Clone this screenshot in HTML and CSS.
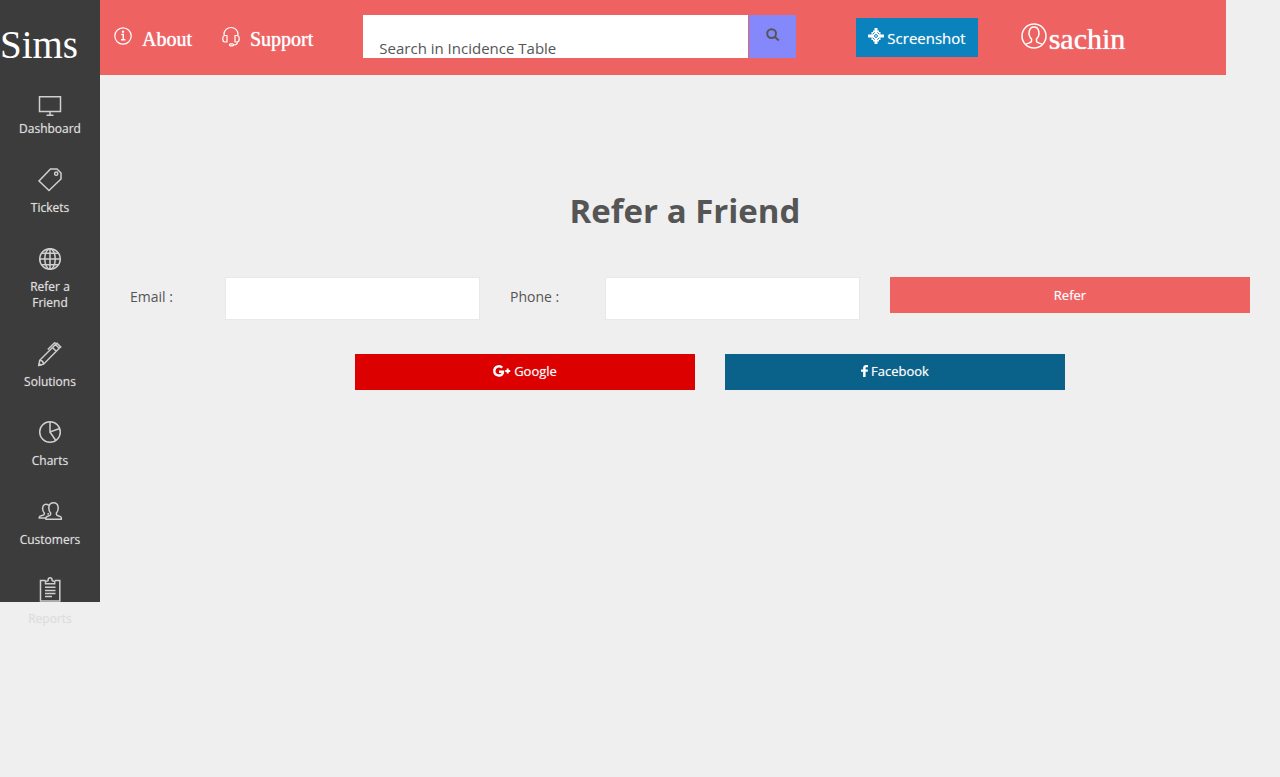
FILE: index.html
```html
<!DOCTYPE html>
<html lang="en">
<head>
<meta charset="utf-8">
<title>Sims - Refer a Friend</title>
<link rel="stylesheet" href="styles.css">
</head>
<body>
<div class="layout">
  <nav class="sidebar" aria-label="Main">
    <a class="brand" href="#">Sims</a>
    <a class="nav-item" href="#">
      <svg class="nav-icon" viewBox="0 0 28 28"><path d="M3.500 7.700h21v14.800h-21zM14 22.500V26M10.500 26.200h7"/></svg>
      <span>Dashboard</span>
    </a>
    <a class="nav-item" href="#">
      <svg class="nav-icon" viewBox="0 0 28 28"><path d="M14.500 1H21l4 4v6L13 22.500 3 13z"/><circle cx="20.200" cy="5.700" r="1.600"/></svg>
      <span>Tickets</span>
    </a>
    <a class="nav-item" href="#">
      <svg class="nav-icon" viewBox="0 0 28 28"><circle cx="14" cy="12" r="10.300"/><ellipse cx="14" cy="12" rx="5.200" ry="10.300"/><path d="M14 1.700v20.600M3.700 12h20.600M5.500 6.300h17M5.500 17.700h17"/></svg>
      <span>Refer a Friend</span>
    </a>
    <a class="nav-item" href="#">
      <svg class="nav-icon" viewBox="0 0 28 28"><path d="M2.800 23.500l.9-5.200L19.500 2.500l3.700 3.700L7.600 22.200zM3.700 18.300c2 .2 3.700 1.900 3.900 3.900M16.500 5.500l3.700 3.700M19.500 2.500l1.500-1.300 3.700 3.700-1.500 1.300M20 1.400L18.500.8 11.800 7.500"/><path class="solid" d="M2.500 24l.6-3.500 2.900 2.800z"/></svg>
      <span>Solutions</span>
    </a>
    <a class="nav-item" href="#">
      <svg class="nav-icon" viewBox="0 0 28 28"><circle cx="14" cy="11" r="10.300"/><path d="M14 .7V11l9.700-3.500M14 11l5.800 8.500"/></svg>
      <span>Charts</span>
    </a>
    <a class="nav-item" href="#">
      <svg class="nav-icon" viewBox="0 0 28 28"><path d="M10 19.300v-2c1-1.500 4.600-1.100 4.600-2.800V13c-2.600-3-2.800-10.300 2.900-10.300s5.500 7.300 2.900 10.300v1.500c0 1.700 4.900 1.300 4.900 3.300v1.500zM12.700 5.200C9.500 3 6.600 4.800 6.600 8.300c0 2 .6 3.700 1.700 4.700v1.300c0 1.500-5 1-5 2.700V18H10M12.200 13v1.800"/></svg>
      <span>Customers</span>
    </a>
    <a class="nav-item" href="#">
      <svg class="nav-icon" viewBox="0 0 28 28"><path d="M9.500 1.500h-5V22h19.300V1.500h-5M9.500 4.800V2.500l2.500-.7c0-4 4.200-4 4.200 0l2.500.7v2.300zM9 8.200h10.500M9 11.500h10.500M9 14.500h10.500M9 17.500h7"/></svg>
      <span>Reports</span>
    </a>
  </nav>

  <div class="content">
    <header class="topbar">
      <a class="top-link about" href="#">
        <svg class="top-icon" viewBox="0 0 18 18"><circle cx="9" cy="9" r="8.200"/><path d="M7.300 7.500H9.300v5M7 12.800h4.400" stroke-width="1.400"/><circle class="solid" cx="9" cy="4.800" r="1.200"/></svg>
        <span>About</span>
      </a>
      <a class="top-link support" href="#">
        <svg class="top-icon" viewBox="0 0 18 18"><path d="M2 8C1.500-2 16.500-2 16 8M5 8.500H3C0 8.500 0 15 3 15h2zM13 8.500h2c3 0 3 6.500 0 6.500h-2zM15.500 15c0 2-1.500 3-4 3"/><rect x="7.500" y="16.800" width="4" height="2" rx="1"/></svg>
        <span>Support</span>
      </a>
      <form class="search">
        <input class="search-input" type="text" placeholder="Search in Incidence Table" aria-label="Search in Incidence Table">
        <button class="search-button" type="button" aria-label="Search">
          <svg class="search-icon" viewBox="0 0 14 14"><circle cx="5.600" cy="5.600" r="4.400"/><path d="M9 9l3.800 3.600"/></svg>
        </button>
      </form>
      <button class="button screenshot" type="button">
        <svg class="target-icon" viewBox="0 0 16 16"><path class="solid" d="M6.500 0h3v2.500h1.500v1.500h1.500v2.500H16v3h-3.500V12H11v1.500H9.500V16h-3v-2.500H5V12H3.500V9.500H0v-3h3.500V4H5V2.500h1.500z"/><path class="cut" d="M6.600 4.300L4.600 6.300M9.400 4.300l2 2M6.600 11.700l-2-2M9.400 11.700l2-2"/><circle class="cut" cx="8" cy="8" r="1.400"/></svg>
        <span>Screenshot</span>
      </button>
      <a class="user" href="#">
        <svg class="user-icon" viewBox="0 0 26 26"><circle cx="13" cy="13" r="12"/><path d="M5 21.500c1-1.800 5.500-1 5.500-3.500v-2C6.500 12 7.500 4 13 4s6.500 8 2.500 12v2c0 2.500 4.500 1.700 5.500 3.500"/></svg>
        <span>sachin</span>
      </a>
    </header>

    <main class="page">
      <h1 class="title">Refer a Friend</h1>
      <form class="refer-form">
        <label class="field-label" for="email">Email :</label>
        <input class="field" id="email" type="email">
        <label class="field-label" for="phone">Phone :</label>
        <input class="field" id="phone" type="tel">
        <button class="button refer" type="button">Refer</button>
      </form>
      <div class="social">
        <button class="button google" type="button">
          <svg class="google-icon" viewBox="0 0 18 12"><path d="M9.200 2.700C6.500 0 1.300 1.600 1.300 6c0 5.300 8.700 6.300 8.700.8H6" stroke-width="2.400"/><path d="M14.700 3.500v5M12.200 6h5" stroke-width="2"/></svg>
          <span>Google</span>
        </button>
        <button class="button facebook" type="button">
          <svg class="facebook-icon" viewBox="0 0 7 12"><path class="solid" d="M7 .1v2.100H5.700c-.9 0-1.100.4-1.100 1.100v1.300H7l-.3 2.200H4.600V12H2.100V6.800H0V4.600h2.100V3C2.100 1 3.300 0 5.200 0z"/></svg>
          <span>Facebook</span>
        </button>
      </div>
    </main>
  </div>
</div>
</body>
</html>
```

FILE: styles.css
```css
* {
  box-sizing: border-box;
}

body {
  margin: 0;
  background: #efefef;
  color: #555;
  font-family: "Open Sans", sans-serif;
  font-size: 14px;
}

a {
  color: inherit;
  text-decoration: none;
}

svg {
  flex: none;
  overflow: visible;
  fill: none;
  stroke: currentColor;
}

.solid {
  fill: currentColor;
  stroke: none;
}

.layout {
  display: flex;
  align-items: flex-start;
  min-height: 100vh;
}

.sidebar {
  flex: 0 0 100px;
  height: 77.5vh;
  background: #3c3c3c;
  color: #dedede;
}

.brand {
  display: block;
  height: 89px;
  color: #fff;
  font: 39px/90px "Liberation Serif", serif;
}

.nav-item {
  display: flex;
  flex-direction: column;
  align-items: center;
  gap: 4px;
  margin-bottom: 31px;
  padding: 0 16px;
  font-size: 12px;
  line-height: 16px;
  text-align: center;
  text-shadow: 0 0 1px rgba(222, 222, 222, 0.6);
}

.nav-icon {
  width: 28px;
  height: 28px;
  color: #cfcfcf;
  stroke-width: 1.5;
}

.content {
  flex: 1;
  min-width: 0;
}

.topbar {
  display: flex;
  align-items: flex-start;
  height: 75px;
  margin-right: 54px;
  background: #ef6262;
  color: #fff;
}

.top-link {
  display: flex;
  gap: 10px;
  padding-top: 27px;
  font: 20px/24px "Liberation Serif", serif;
  text-shadow: 0 0 1px #fff;
}

.about {
  margin-left: 14px;
}

.support {
  margin-left: 30px;
}

.top-icon {
  width: 18px;
  height: 18px;
  stroke-width: 1.2;
}

.search {
  display: flex;
  flex: 1;
  gap: 1px;
  max-width: 433px;
  height: 43px;
  margin: 15px 60px 0 50px;
}

.search-input {
  flex: 1;
  min-width: 0;
  padding: 23px 16px 0;
  border: 0;
  background: #fff;
  color: #555;
  font: 15px/20px "Open Sans", sans-serif;
}

.search-input::placeholder {
  color: #555;
  opacity: 1;
}

.search-button {
  display: flex;
  justify-content: center;
  width: 47px;
  padding: 13px 0 0;
  border: 0;
  background: #8488fb;
  color: #555;
}

.search-icon {
  width: 14px;
  height: 14px;
  stroke-width: 2;
}

.button {
  display: flex;
  align-items: center;
  justify-content: center;
  gap: 3px;
  height: 36px;
  padding: 0 12px;
  border: 0;
  color: #fff;
  font: 13px/18px "Open Sans", sans-serif;
  text-shadow: 0 0 1px rgba(255, 255, 255, 0.5);
}

.screenshot {
  height: 39px;
  margin-top: 18px;
  background: #0a82bd;
  font-size: 15px;
}

.target-icon {
  width: 16px;
  height: 16px;
  margin-bottom: 4px;
}

.cut {
  stroke: #0a82bd;
}

.user {
  display: flex;
  gap: 2px;
  margin-left: 43px;
  padding-top: 23px;
  font: 30px/32px "Liberation Serif", serif;
  text-shadow: 0 0 1px #fff;
}

.user-icon {
  width: 26px;
  height: 26px;
  stroke-width: 1.5;
}

.page {
  padding: 112px 30px 0;
}

.title {
  margin: 0 0 42px;
  padding-right: 10px;
  font-size: 33px;
  line-height: 48px;
  text-align: center;
}

.refer-form {
  display: grid;
  grid-template-columns: 65fr 255fr 65fr 255fr 360fr;
  gap: 30px;
  align-items: start;
}

.field-label {
  line-height: 40px;
  white-space: nowrap;
}

.field {
  width: 100%;
  min-width: 0;
  height: 43px;
  padding: 0 12px;
  border: 1px solid #e8e8e8;
  background: #fff;
  color: #555;
  font: 14px/20px "Open Sans", sans-serif;
}

.refer {
  background: #ef6262;
}

.social {
  display: grid;
  grid-template-columns: 1fr 1fr;
  gap: 30px;
  margin-top: 34px;
  padding: 0 185px 0 225px;
}

.social .button {
  padding-bottom: 2px;
}

.google {
  background: #d00;
}

.facebook {
  background: #0a6189;
}

.google-icon {
  width: 18px;
  height: 12px;
}

.facebook-icon {
  width: 7px;
  height: 12px;
}
```
